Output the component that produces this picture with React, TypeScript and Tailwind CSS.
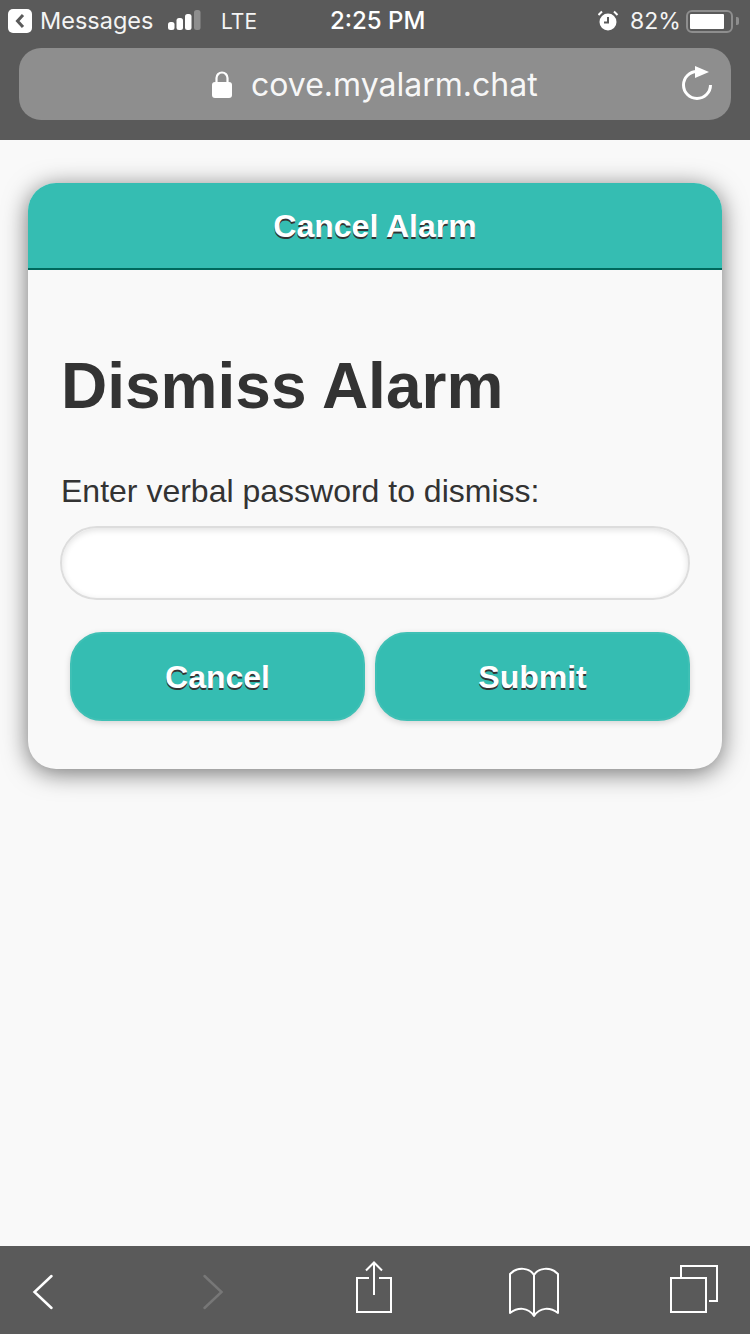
export default function App() {
  return (
    <div className="min-h-[1334px] flex flex-col bg-[#f9f9f9] font-['Liberation_Sans',Arial,sans-serif]">
      <TopBar />

      <main className="flex-1 px-[28px] pt-[43px]">
        <div className="rounded-[28px] bg-[#f9f9f9] shadow-[0_4px_24px_rgba(0,0,0,0.55)]">
          <div className="h-[87px] rounded-t-[28px] bg-[#35bdb2] border-b-2 border-[#00695c] flex items-center justify-center">
            <h2 className="text-[32px] font-bold text-white [text-shadow:0_2px_0_#333]">Cancel Alarm</h2>
          </div>
          <div className="pt-[80px] pl-[32px] pr-[32px] pb-[48px]">
            <h1 className="text-[64px] leading-[72px] font-bold text-[#333] ml-px">Dismiss Alarm</h1>
            <label className="block mt-[49px] ml-px text-[32px] leading-[40px] text-[#333]">Enter verbal password to dismiss:</label>
            <input
              type="text"
              className="block mt-[15px] w-[630px] h-[74px] rounded-[37px] bg-white border-2 border-[#ddd] shadow-[inset_0_2px_6px_rgba(0,0,0,0.12)] outline-none"
            />
            <div className="flex mt-[32px] ml-[10px] gap-[10px]">
              <TealButton className="w-[295px]">Cancel</TealButton>
              <TealButton className="w-[315px]">Submit</TealButton>
            </div>
          </div>
        </div>
      </main>

      <BottomBar />
    </div>
  )
}

function TealButton({ children, className }: { children: string; className: string }) {
  return (
    <button
      className={`h-[89px] rounded-[32px] bg-[#35bdb2] border-2 border-[#3fc0b5] shadow-[0_2px_6px_rgba(0,0,0,0.15)] text-[32px] font-bold text-white [text-shadow:0_2px_0_#333] ${className}`}
    >
      {children}
    </button>
  )
}

function TopBar() {
  return (
    <div className="h-[140px] bg-[#5a5a5a] font-['Inter',sans-serif] text-white">
      <div className="h-[42px] flex items-center pl-[8px] text-[23.5px] leading-none">
        <div className="w-[24px] h-[24px] rounded-[5px] bg-white flex items-center justify-center">
          <svg width="12" height="16" viewBox="0 0 12 16" fill="none">
            <path d="M9 2 L3.5 8 L9 14" stroke="#5a5a5a" strokeWidth="3" />
          </svg>
        </div>
        <span className="ml-[8px] w-[112px] text-[#f4f4f4]">Messages</span>
        <svg className="ml-[16px]" width="33" height="22" viewBox="0 0 33 22">
          <rect x="0" y="12" width="6.5" height="8" rx="2.5" fill="#fff" />
          <rect x="8.5" y="8" width="6.5" height="12" rx="2.5" fill="#fff" />
          <rect x="17" y="4" width="6.5" height="16" rx="2.5" fill="#fff" />
          <rect x="26" y="0" width="6.5" height="20" rx="2.5" fill="#8e8e8e" />
        </svg>
        <span className="ml-[20px] w-[109px] text-[21px] text-[#f4f4f4]">LTE</span>
        <span className="w-[268px] text-[24px] font-medium">2:25 PM</span>
        <svg width="22" height="22" viewBox="0 0 22 22">
          <circle cx="10" cy="12" r="8.5" fill="#fff" />
          <path d="M10 7 V12.5 H6" stroke="#5a5a5a" strokeWidth="2" fill="none" />
          <path d="M0.5 5 L4 1.5 M19.5 5 L16 1.5" stroke="#fff" strokeWidth="2" />
        </svg>
        <span className="ml-[10px] w-[49px] text-[23px] text-[#f4f4f4]">82%</span>
        <div className="ml-[7px] w-[47px] h-[23px] rounded-[6px] border-2 border-[#8e8e8e] p-[2px]">
          <div className="w-[34px] h-full bg-white rounded-[1px]" />
        </div>
        <div className="ml-[3px] w-[3px] h-[8px] rounded-r-[2px] bg-[#8e8e8e]" />
      </div>

      <div className="mx-[19px] mt-[6px] h-[72px] rounded-[22px] bg-[#8e8e8e] flex items-center pr-[18px]">
        <svg className="ml-[193px]" width="20" height="27" viewBox="0 0 20 27">
          <path d="M4.5 12 V7 a5.5 5.5 0 0 1 11 0 V12" fill="none" stroke="#fff" strokeWidth="2.2" />
          <rect x="0" y="11" width="20" height="16" rx="3" fill="#fff" />
        </svg>
        <span className="ml-[19px] flex-1 pt-[2px] text-[32px] leading-none text-[#f7f7f7]">cove.myalarm.chat</span>
        <svg width="32" height="36" viewBox="0 0 32 36" fill="none">
          <path d="M16 5.5 A13.5 13.5 0 1 0 29.5 19" stroke="#fff" strokeWidth="3" />
          <path d="M14 0 L28 6 L14 12 Z" fill="#fff" />
        </svg>
      </div>
    </div>
  )
}

function BottomBar() {
  return (
    <div className="h-[88px] bg-[#5a5a5a] flex items-start">
      <svg className="ml-[32px] mt-[28px]" width="22" height="36" viewBox="0 0 22 36" fill="none">
        <path d="M19.5 2 L2.5 18 L19.5 34" stroke="#fff" strokeWidth="2.5" strokeLinecap="round" />
      </svg>
      <svg className="ml-[148px] mt-[28px]" width="22" height="36" viewBox="0 0 22 36" fill="none">
        <path d="M2.5 2 L19.5 18 L2.5 34" stroke="#777" strokeWidth="2.5" strokeLinecap="round" />
      </svg>
      <svg className="ml-[132px] mt-[15px]" width="38" height="54" viewBox="0 0 38 54" fill="none" stroke="#fff" strokeWidth="2">
        <path d="M13 17 H1 V51 H35 V17 H23" />
        <path d="M18 2 V34" />
        <path d="M10 9.5 L18 1.5 L26 9.5" />
      </svg>
      <svg className="ml-[114px] mt-[19px]" width="52" height="54" viewBox="0 0 52 54" fill="none" stroke="#fff" strokeWidth="2" strokeLinejoin="round">
        <path d="M26 10 C22 3 10 1 2 9 V48 C10 42 20 42 26 51 C32 42 42 42 50 48 V9 C42 1 30 3 26 10 Z" />
        <path d="M26 10 V51" />
      </svg>
      <svg className="ml-[110px] mt-[19px]" width="50" height="50" viewBox="0 0 50 50" fill="none" stroke="#fff" strokeWidth="2">
        <path d="M11 13 V1 H47 V36 H39" />
        <rect x="1" y="13" width="35" height="34" />
      </svg>
    </div>
  )
}
